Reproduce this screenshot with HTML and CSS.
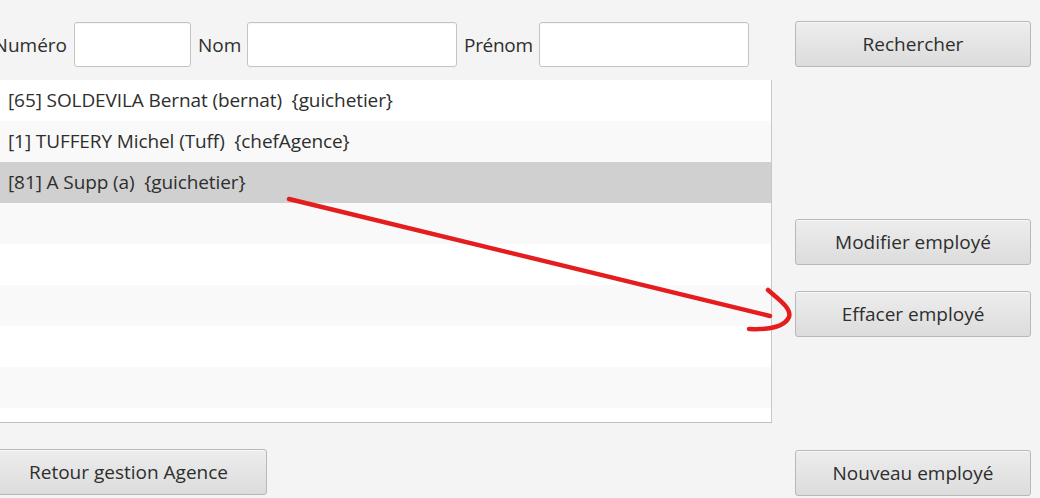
FILE: index.html
```html
<!DOCTYPE html>
<html lang="fr">
<head>
<meta charset="utf-8">
<link rel="stylesheet" href="styles.css">
</head>
<body>
<div class="app">
  <div class="left">
    <div class="search">
      <label class="lbl l-num">Numéro</label>
      <div class="field f-num"></div>
      <label class="lbl l-nom">Nom</label>
      <div class="field f-wide"></div>
      <label class="lbl l-pre">Prénom</label>
      <div class="field f-wide"></div>
    </div>
    <div class="list">
      <div class="row">[65] SOLDEVILA Bernat (bernat)&nbsp; {guichetier}</div>
      <div class="row odd">[1] TUFFERY Michel (Tuff)&nbsp; {chefAgence}</div>
      <div class="row sel">[81] A Supp (a)&nbsp; {guichetier}</div>
      <div class="row odd"></div>
      <div class="row"></div>
      <div class="row odd"></div>
      <div class="row"></div>
      <div class="row odd"></div>
    </div>
    <div class="bottom">
      <button class="btn btn-back">Retour gestion Agence</button>
    </div>
  </div>
  <div class="right">
    <button class="btn btn-search">Rechercher</button>
    <button class="btn btn-mod">Modifier employé</button>
    <button class="btn btn-del">Effacer employé</button>
    <button class="btn btn-new">Nouveau employé</button>
  </div>
</div>
<svg class="arrow" width="1040" height="498" viewBox="0 0 1040 498">
  <path d="M289 199 L770 316" fill="none" stroke="#e41e1e" stroke-width="4.5" stroke-linecap="round"/>
  <path d="M768 290 C777 298 792 308 789 317 C785 326 772 330 749 329" fill="none" stroke="#e41e1e" stroke-width="4.5" stroke-linecap="round"/>
</svg>
</body>
</html>
```
FILE: styles.css
```css
html, body {
  margin: 0;
  padding: 0;
  width: 1040px;
  height: 498px;
  overflow: hidden;
  background: #f4f4f4;
  font-family: "Open Sans", "Noto Sans", sans-serif;
  font-size: 19px;
  color: #2e2e2e;
}
.app {
  display: grid;
  grid-template-columns: 782px 236px;
  column-gap: 23px;
  margin-left: -10px;
  height: 498px;
}
.left {
  display: flex;
  flex-direction: column;
}
.search {
  display: flex;
  align-items: center;
  margin-top: 22px;
  height: 45px;
}
.lbl {
  white-space: nowrap;
  margin-right: 7px;
  text-align: left;
}
.l-num { width: 77px; text-align: right; }
.l-nom { width: 42px; }
.l-pre { width: 68px; letter-spacing: -0.3px; }
.field {
  height: 43px;
  background: #fff;
  border: 1px solid #c4c4c4;
  border-radius: 3px;
  box-shadow: inset 0 1px 1px rgba(0,0,0,0.04);
  margin-right: 7px;
}
.f-num { width: 115px; }
.f-wide { width: 208px; }
.list {
  margin-top: 13px;
  height: 342px;
  background: #fff;
  border-right: 1px solid #c8c8c8;
  border-bottom: 1px solid #c0c0c0;
  overflow: hidden;
}
.row {
  height: 41px;
  line-height: 41px;
  padding-left: 18px;
  background: #fff;
  white-space: pre;
  letter-spacing: -0.1px;
}
.row.odd { background: #f9f9f9; }
.row.sel { background: #d0d0d0; }
.bottom {
  margin-top: 26px;
}
.btn {
  display: flex;
  align-items: center;
  justify-content: center;
  height: 46px;
  padding: 0;
  font: inherit;
  color: #2e2e2e;
  background: linear-gradient(#ededed, #dcdcdc);
  border: 1px solid #b8b8b8;
  border-radius: 3px;
  box-shadow: inset 0 1px 0 rgba(255,255,255,0.6);
}
.btn-back { width: 277px; }
.right {
  display: flex;
  flex-direction: column;
}
.right .btn { width: 236px; }
.btn-search { margin-top: 21px; }
.btn-mod { margin-top: 152px; }
.btn-del { margin-top: 26px; }
.btn-new { margin-top: 113px; }
.arrow {
  position: absolute;
  left: 0;
  top: 0;
  pointer-events: none;
}
```
